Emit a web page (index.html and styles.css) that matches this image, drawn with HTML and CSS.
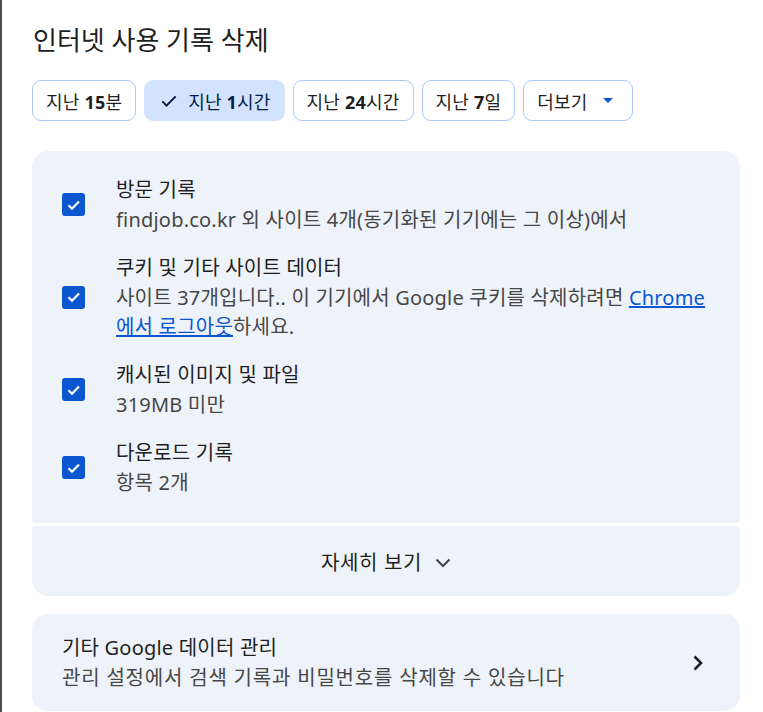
FILE: index.html
```html
<!DOCTYPE html>
<html lang="ko">
<head>
  <meta charset="UTF-8">
  <meta name="viewport" content="width=device-width, initial-scale=1.0">
  <title>인터넷 사용 기록 삭제</title>
  <link rel="stylesheet" href="styles.css">
</head>
<body>

  <div class="dialog">
    <h1 class="title">인터넷 사용 기록 삭제</h1>

    <!-- Time range chips -->
    <div class="chips">
      <button class="chip"><span>지난 <b>15</b>분</span></button>
      <button class="chip selected">
        <svg class="chip-check" width="20" height="20" viewBox="0 0 24 24"><path d="M4 12.5l5 5L20 6.5" fill="none" stroke="#041e49" stroke-width="2.4"/></svg>
        <span>지난 <b>1</b>시간</span>
      </button>
      <button class="chip"><span>지난 <b>24</b>시간</span></button>
      <button class="chip"><span>지난 <b>7</b>일</span></button>
      <button class="chip more"><span>더보기</span><span class="caret"></span></button>
    </div>

    <!-- Data types -->
    <div class="card list">
      <label class="item">
        <span class="box"><svg width="16" height="16" viewBox="0 0 16 16"><path d="M2.5 8.2l3.5 3.5 7-7.2" fill="none" stroke="#fff" stroke-width="2.2"/></svg></span>
        <span class="text">
          <span class="item-title">방문 기록</span>
          <span class="item-sub">findjob.co.kr 외 사이트 4개(동기화된 기기에는 그 이상)에서</span>
        </span>
      </label>
      <label class="item">
        <span class="box"><svg width="16" height="16" viewBox="0 0 16 16"><path d="M2.5 8.2l3.5 3.5 7-7.2" fill="none" stroke="#fff" stroke-width="2.2"/></svg></span>
        <span class="text">
          <span class="item-title">쿠키 및 기타 사이트 데이터</span>
          <span class="item-sub">사이트 37개입니다.. 이 기기에서 Google 쿠키를 삭제하려면 <a href="#">Chrome</a> <a href="#">에서 로그아웃</a>하세요.</span>
        </span>
      </label>
      <label class="item">
        <span class="box"><svg width="16" height="16" viewBox="0 0 16 16"><path d="M2.5 8.2l3.5 3.5 7-7.2" fill="none" stroke="#fff" stroke-width="2.2"/></svg></span>
        <span class="text">
          <span class="item-title">캐시된 이미지 및 파일</span>
          <span class="item-sub">319MB 미만</span>
        </span>
      </label>
      <label class="item">
        <span class="box"><svg width="16" height="16" viewBox="0 0 16 16"><path d="M2.5 8.2l3.5 3.5 7-7.2" fill="none" stroke="#fff" stroke-width="2.2"/></svg></span>
        <span class="text">
          <span class="item-title">다운로드 기록</span>
          <span class="item-sub">항목 2개</span>
        </span>
      </label>
    </div>

    <div class="card more-row">
      <span>자세히 보기</span>
      <svg width="16" height="10" viewBox="0 0 16 10"><path d="M1.5 1.5l6.5 6.5 6.5-6.5" fill="none" stroke="#474747" stroke-width="2.2"/></svg>
    </div>

    <div class="card link-row">
      <div class="text">
        <span class="item-title">기타 Google 데이터 관리</span>
        <span class="item-sub wide">관리 설정에서 검색 기록과 비밀번호를 삭제할 수 있습니다</span>
      </div>
      <svg width="12" height="16" viewBox="0 0 12 16"><path d="M2.5 1.5l6.5 6.5-6.5 6.5" fill="none" stroke="#1f1f1f" stroke-width="2.6"/></svg>
    </div>
  </div>

</body>
</html>
```

FILE: styles.css
```css
body {
  margin: 0;
  background-color: #fff;
  color: #1f1f1f;
  font-family: 'Noto Sans', 'Noto Sans CJK KR', sans-serif;
}

.dialog {
  border-left: 2px solid #4d4d4d;
  min-height: 712px;
  box-sizing: border-box;
  padding: 24px 23px 0 30px;
}

.title {
  margin: 0 0 24px 1px;
  font-size: 26px;
  line-height: 32px;
  font-weight: 400;
}

.chips {
  display: flex;
  gap: 8px;
}

.chip {
  display: flex;
  align-items: center;
  height: 41px;
  padding: 0 13px;
  border: 1px solid #a8c7fa;
  border-radius: 9px;
  background-color: #fff;
  color: #1f1f1f;
  font-family: inherit;
  font-size: 18px;
  letter-spacing: 0.2px;
}

.chip b {
  font-weight: 700;
}

.chip.selected {
  background-color: #d3e3fd;
  border-color: #d3e3fd;
  color: #041e49;
  padding-left: 14px;
}

.chip-check {
  margin-right: 9px;
}

.chip.more {
  padding-right: 19px;
}

.caret {
  margin-left: 15px;
  width: 0;
  height: 0;
  border-left: 5px solid transparent;
  border-right: 5px solid transparent;
  border-top: 5px solid #0b57d0;
}

.card {
  background-color: #eef2f9;
  border-radius: 16px;
}

.list {
  margin-top: 30px;
  padding: 24px 30px 26px;
  border-radius: 16px 16px 4px 4px;
  display: flex;
  flex-direction: column;
  gap: 19px;
}

.item {
  display: flex;
  align-items: center;
  gap: 31px;
}

.box {
  flex: none;
  width: 23px;
  height: 23px;
  border-radius: 3px;
  background-color: #0b57d0;
  display: flex;
  align-items: center;
  justify-content: center;
}

.text {
  display: flex;
  flex-direction: column;
  letter-spacing: 0.2px;
}

.item-title {
  font-size: 20px;
  line-height: 30px;
  color: #1f1f1f;
}

.item-sub {
  font-size: 20px;
  line-height: 29px;
  color: #474747;
}

.item-sub.wide {
  letter-spacing: 0.8px;
}

.item-sub a {
  color: #0b57d0;
}

.more-row {
  margin-top: 3px;
  height: 70px;
  border-radius: 4px 4px 16px 16px;
  display: flex;
  align-items: center;
  justify-content: center;
  gap: 13px;
  font-size: 20px;
  letter-spacing: 0.6px;
  color: #1f1f1f;
}

.more-row svg {
  margin-top: 4px;
}

.link-row {
  margin-top: 18px;
  padding: 19px 36px 19px 30px;
  display: flex;
  align-items: center;
  justify-content: space-between;
}
```
